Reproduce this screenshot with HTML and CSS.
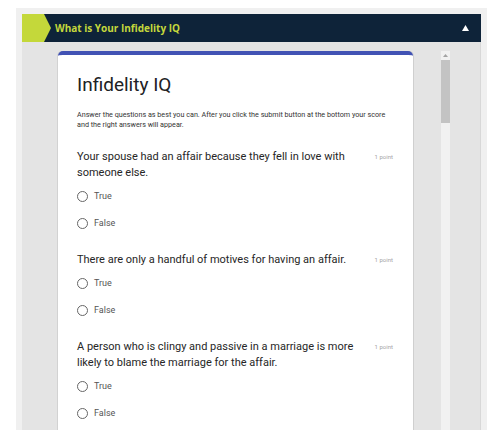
FILE: index.html
```html
<!DOCTYPE html>
<html>
<head>
<meta charset="utf-8">
<link rel="stylesheet" href="styles.css">
</head>
<body>
<div class="frame">
  <div class="header">
    <svg class="chevron" width="29" height="28" viewBox="0 0 29 28"><polygon points="0,0 22,0 29,14 22,28 0,28" fill="#c4d83a"/></svg>
    <h2 class="header-title">What is Your Infidelity IQ</h2>
    <svg class="toggle" width="7" height="6" viewBox="0 0 7 6"><polygon points="3.5,0 7,6 0,6" fill="#ffffff"/></svg>
  </div>
  <div class="content">
    <div class="card">
      <h1 class="form-title">Infidelity IQ</h1>
      <p class="form-desc">Answer the questions as best you can. After you click the submit button at the bottom your score and the right answers will appear.</p>

      <div class="question">
        <div class="q-head">
          <div class="q-text">Your spouse had an affair because they fell in love with someone else.</div>
          <div class="q-points">1 point</div>
        </div>
        <div class="option"><span class="radio"></span><span class="opt-label">True</span></div>
        <div class="option"><span class="radio"></span><span class="opt-label">False</span></div>
      </div>

      <div class="question">
        <div class="q-head">
          <div class="q-text">There are only a handful of motives for having an affair.</div>
          <div class="q-points">1 point</div>
        </div>
        <div class="option"><span class="radio"></span><span class="opt-label">True</span></div>
        <div class="option"><span class="radio"></span><span class="opt-label">False</span></div>
      </div>

      <div class="question">
        <div class="q-head">
          <div class="q-text">A person who is clingy and passive in a marriage is more likely to blame the marriage for the affair.</div>
          <div class="q-points">1 point</div>
        </div>
        <div class="option"><span class="radio"></span><span class="opt-label">True</span></div>
        <div class="option"><span class="radio"></span><span class="opt-label">False</span></div>
      </div>
    </div>
    <div class="scrollbar">
      <div class="sb-up"><svg width="5" height="3" viewBox="0 0 5 3"><polygon points="2.5,0 5,3 0,3" fill="#a3a3a3"/></svg></div>
      <div class="sb-thumb"></div>
    </div>
  </div>
</div>
</body>
</html>
```

FILE: styles.css
```css
html, body {
  margin: 0;
  padding: 0;
  background: #ffffff;
  overflow: hidden;
}

.frame {
  margin: 8px 0 0 16px;
  width: 459px;
  padding: 6px 6px 0 6px;
  background: #f0f0f0;
}

.header {
  display: flex;
  align-items: center;
  height: 28px;
  background: #0e2339;
  padding-right: 12px;
}

.chevron {
  display: block;
  flex: none;
}

.header-title {
  margin: 0 0 0 4px;
  flex: 1;
  font-family: "Open Sans", "DejaVu Sans", sans-serif;
  font-weight: 700;
  font-size: 10px;
  color: #c5d83c;
  line-height: 28px;
}

.toggle {
  display: block;
  flex: none;
}

.content {
  display: flex;
  align-items: flex-start;
  height: 400px;
  background: #e4e4e4;
  padding: 9px 0 0 36px;
  border-right: 1px solid #d8d8d8;
  box-sizing: border-box;
}

.card {
  width: 355px;
  flex: none;
  box-sizing: border-box;
  background: #ffffff;
  border-top: 4px solid #4152b4;
  border-radius: 5px 5px 0 0;
  box-shadow: -1px 0 0 #d2d2d2, 1px 0 0 #cfcfcf;
  padding: 18px 20px 40px 19px;
  font-family: Roboto, "Liberation Sans", sans-serif;
  height: 400px;
}

.form-title {
  margin: 0;
  font-size: 19px;
  font-weight: 400;
  line-height: 24px;
  color: #202124;
}

.form-desc {
  margin: 13px 0 19px 0;
  font-size: 7.2px;
  line-height: 10px;
  color: #333333;
}

.question {
  margin-bottom: 16px;
}

.q-head {
  display: flex;
  align-items: flex-start;
  gap: 12px;
}

.q-text {
  flex: 1;
  font-size: 11px;
  line-height: 16px;
  color: #262626;
}

.q-points {
  flex: none;
  font-size: 6px;
  line-height: 16px;
  color: #a6a6a6;
}

.option {
  display: flex;
  align-items: center;
  height: 26px;
  margin-top: 1px;
}

.q-head + .option {
  margin-top: 2px;
}

.radio {
  width: 9px;
  height: 9px;
  border: 1.5px solid #666666;
  border-radius: 50%;
  flex: none;
}

.opt-label {
  margin-left: 6px;
  font-size: 9px;
  color: #555555;
}

.scrollbar {
  margin-left: 28px;
  width: 9px;
  height: 400px;
  background: #f1f1f1;
  flex: none;
}

.sb-up {
  height: 9px;
  display: flex;
  align-items: center;
  justify-content: center;
}

.sb-up svg {
  display: block;
}

.sb-thumb {
  height: 63px;
  background: #c3c3c3;
}
```
